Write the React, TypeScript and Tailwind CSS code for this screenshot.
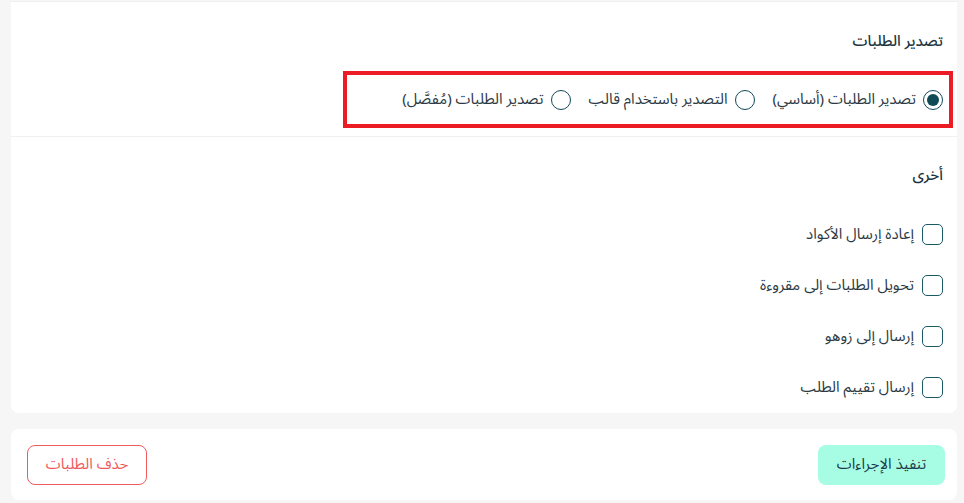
import React from "react";

const font = { fontFamily: '"Noto Sans Arabic", "Noto Sans", "DejaVu Sans", sans-serif' };

function Radio({ checked, label }: { checked?: boolean; label: string }) {
  return (
    <label className="flex items-center gap-[7px]">
      <span className="w-[20px] h-[20px] rounded-full border-[1.5px] border-[#0f4a57] flex items-center justify-center shrink-0">
        {checked && <span className="w-[12px] h-[12px] rounded-full bg-[#0f4a57]" />}
      </span>
      <span className="text-[15px] text-[#2c3a44] leading-none whitespace-nowrap">{label}</span>
    </label>
  );
}

function Check({ label }: { label: string }) {
  return (
    <label className="flex items-center gap-[8px] h-[20px]">
      <span className="w-[21px] h-[21px] rounded-[5px] border-[1.5px] border-[#1a5a66] shrink-0" />
      <span className="text-[15px] text-[#2c3a44] leading-none whitespace-nowrap">{label}</span>
    </label>
  );
}

export default function App() {
  return (
    <div dir="rtl" style={font} className="w-[964px] h-[503px] bg-[#f6f6f6] overflow-hidden">
      <div className="mr-[7px] ml-[11px] mt-[1px] bg-white rounded-b-[8px] border-t border-[#efefef]">
        <div className="pr-[14px] pt-[27px] h-[135px] border-b border-[#f0f0f0]">
          <div className="text-[15px] text-[#1e3540] leading-[24px] font-medium">تصدير الطلبات</div>
          <div className="mt-[18px] -mr-[10px] w-[610px] h-[57px] border-4 border-[#ec1c24] pr-[6px] flex items-center gap-[18px]">
            <Radio checked label="تصدير الطلبات (أساسي)" />
            <Radio label="التصدير باستخدام قالب" />
            <Radio label="تصدير الطلبات (مُفصَّل)" />
          </div>
        </div>
        <div className="pr-[14px] pt-[26px] pb-[16px]">
          <div className="text-[15px] text-[#1e3540] leading-[24px] font-medium">أخرى</div>
          <div className="mt-[37px] flex flex-col gap-[31px]">
            <Check label="إعادة إرسال الأكواد" />
            <Check label="تحويل الطلبات إلى مقروءة" />
            <Check label="إرسال إلى زوهو" />
            <Check label="إرسال تقييم الطلب" />
          </div>
        </div>
      </div>
      <div className="mr-[7px] ml-[11px] mt-[16px] h-[71px] bg-white rounded-[8px] px-[12px] pl-[16px] flex items-center justify-between">
        <button className="h-[40px] w-[127px] rounded-[8px] bg-[#a7fde4] text-[#1d3a48] text-[15px]">تنفيذ الإجراءات</button>
        <button className="h-[40px] w-[120px] rounded-[8px] border border-[#f05b5e] text-[#ef5a5d] text-[15px] bg-white">حذف الطلبات</button>
      </div>
    </div>
  );
}
